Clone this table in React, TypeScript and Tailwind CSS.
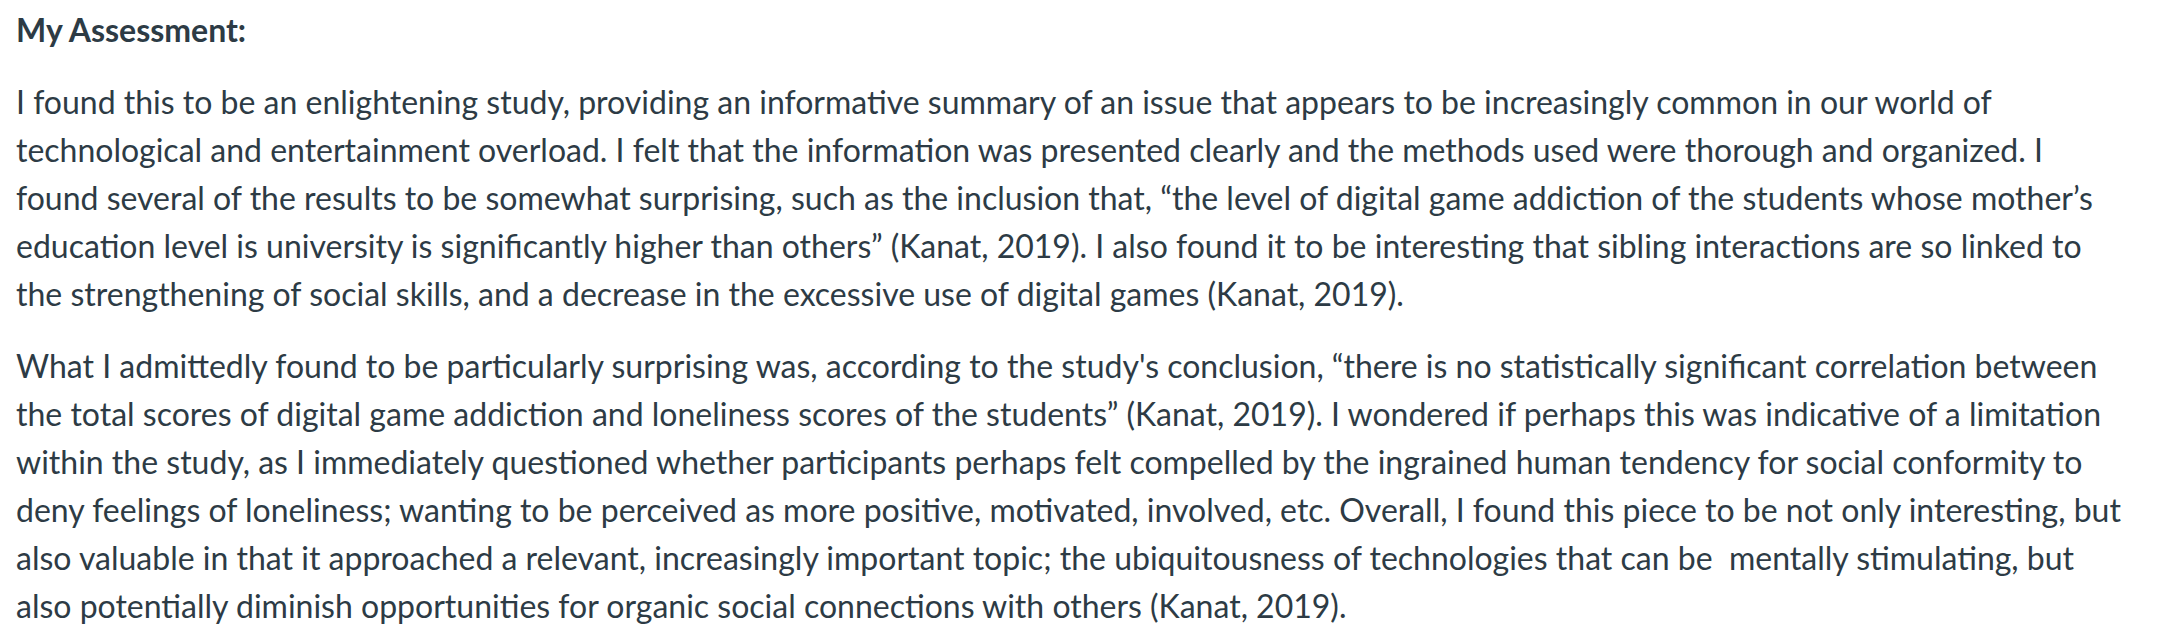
export default function App() {
  return (
    <div className="min-h-screen bg-white">
      <div
        className="px-4 pt-[6px] w-[2140px] text-[#2d3b45] text-[32px] leading-[48px]"
        style={{ fontFamily: "Lato, 'Open Sans', sans-serif" }}
      >
        <p className="mb-[24px]">
          <strong className="font-bold">My Assessment:</strong>
        </p>
        <p className="mb-[24px]">
          I found this to be an enlightening study, providing an informative summary of an issue that appears to be increasingly common in our world of technological and entertainment overload. I felt that the information was presented clearly and the methods used were thorough and organized. I found several of the results to be somewhat surprising, such as the inclusion that, “the level of digital game addiction of the students whose mother’s education level is university is significantly higher than others” (Kanat, 2019). I also found it to be interesting that sibling interactions are so linked to the strengthening of social skills, and a decrease in the excessive use of digital games (Kanat, 2019).
        </p>
        <p>
          What I admittedly found to be particularly surprising was, according to the study's conclusion, “there is no statistically significant correlation between the total scores of digital game addiction and loneliness scores of the students” (Kanat, 2019). I wondered if perhaps this was indicative of a limitation within the study, as I immediately questioned whether participants perhaps felt compelled by the ingrained human tendency for social conformity to deny feelings of loneliness; wanting to be perceived as more positive, motivated, involved, etc. Overall, I found this piece to be not only interesting, but also valuable in that it approached a relevant, increasingly important topic; the ubiquitousness of technologies that can be{"\u00a0"} mentally stimulating, but also potentially diminish opportunities for organic social connections with others (Kanat, 2019).
        </p>
      </div>
    </div>
  );
}
